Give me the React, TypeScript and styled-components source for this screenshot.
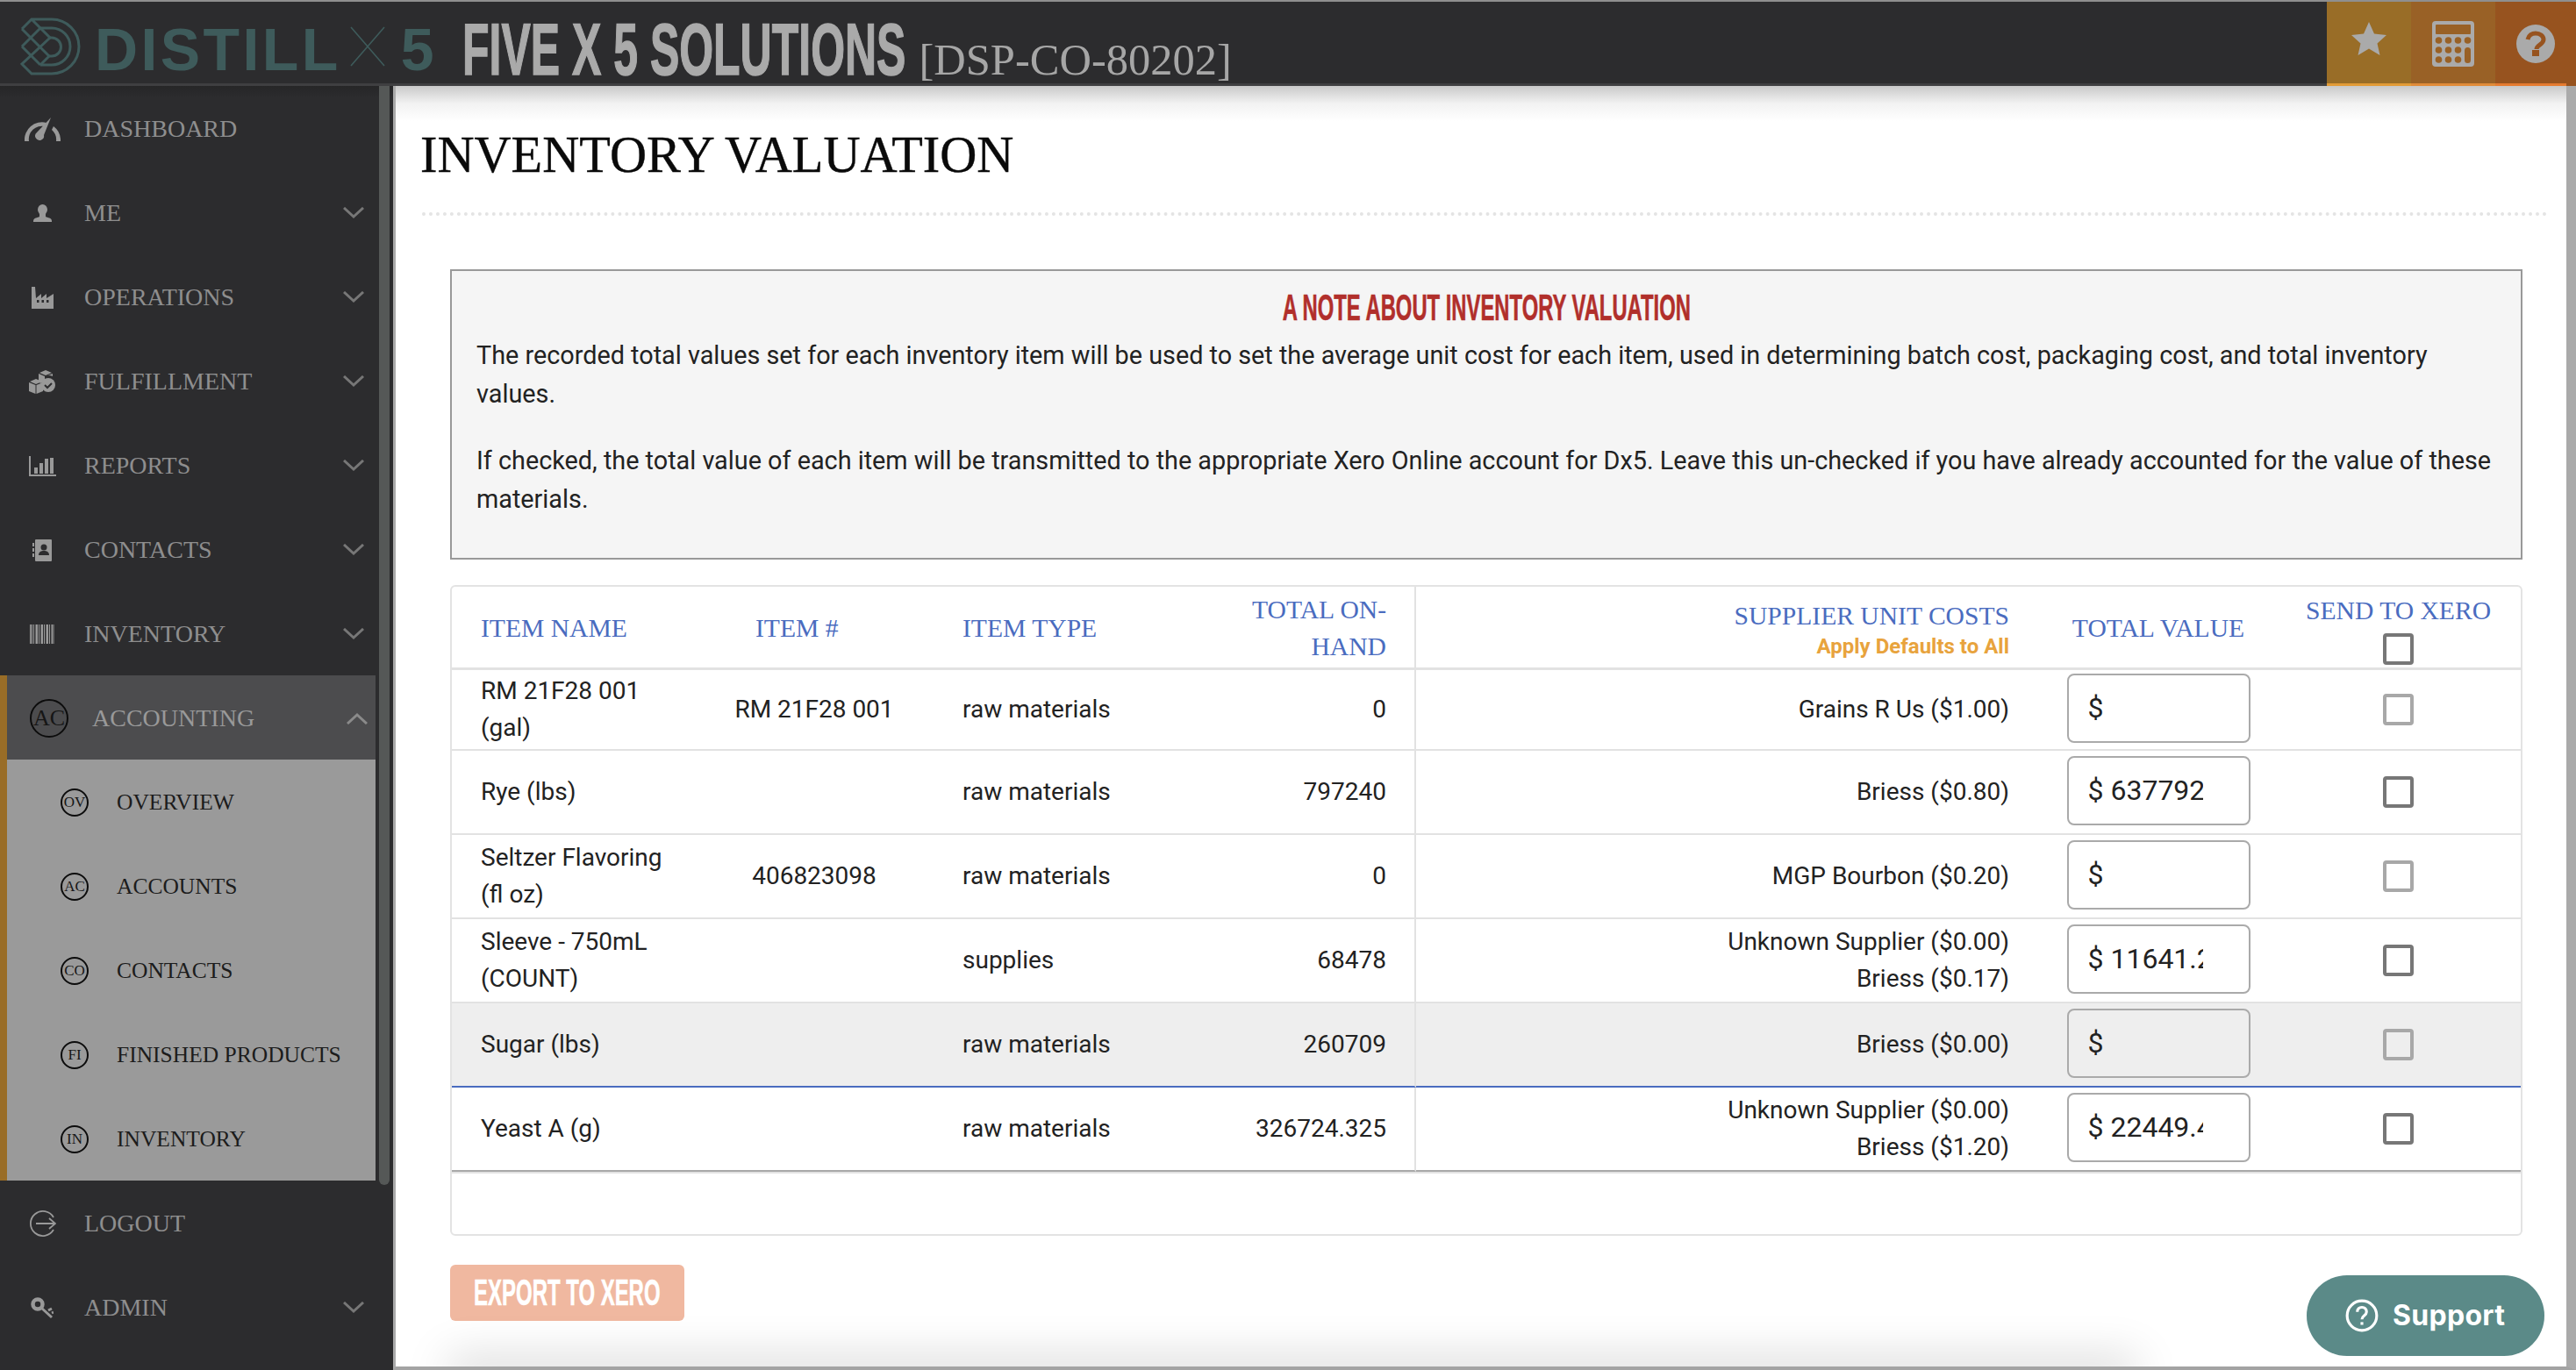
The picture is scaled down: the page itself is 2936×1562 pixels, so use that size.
import React from 'react';
import styled, { createGlobalStyle } from 'styled-components';

const SANS = '"Liberation Sans", Arial, sans-serif';
const SLAB = '"Liberation Serif", "DejaVu Serif", serif';
const BODY = 'Roboto, "Liberation Sans", sans-serif';

const GlobalStyle = createGlobalStyle`
    html, body {
        margin: 0;
        padding: 0;
        height: 100%;
        overflow: hidden;
        background: #2c2c2e;
    }

    * {
        box-sizing: border-box;
    }
`;

const Page = styled.div`
    display: flex;
    flex-direction: column;
    position: relative;
    width: 2936px;
    height: 1562px;
    overflow: hidden;
    font-family: ${BODY};
`;

/* ---------- top bar ---------- */

const TopBar = styled.header`
    display: flex;
    align-items: stretch;
    flex: none;
    height: 98px;
    background: #2c2c2e;
    border-top: 2px solid #8f8f8f;
    box-shadow: inset 0 -3px 0 #3f3f41;
`;

const Brand = styled.div`
    display: flex;
    align-items: flex-start;
    flex: 1;
    padding: 18px 0 0 23px;
`;

const LogoMark = styled.svg`
    flex: none;
    width: 70px;
    height: 66px;
    fill: none;
    stroke: #3e5b5b;
    stroke-width: 3;
`;

const LogoWord = styled.span`
    margin: -3px 0 0 15px;
    font: 700 68px/78px ${SANS};
    letter-spacing: 3.4px;
    color: #3e5b5b;
`;

const LogoTimes = styled.svg`
    flex: none;
    width: 40px;
    height: 46px;
    margin: 10px 18px 0 10px;
    stroke: #3e5b5b;
    stroke-width: 1.6;
`;

const LogoFive = styled.span`
    font: 700 68px/78px ${SANS};
    color: #3e5b5b;
    margin-top: -3px;
`;

const CompanyBox = styled.div`
    flex: none;
    width: 505px;
    margin: -4px 16px 0 32px;
`;

const CompanyName = styled.span`
    display: inline-block;
    font: 700 84px/80px ${SANS};
    white-space: nowrap;
    color: #aaaaaa;
    -webkit-text-stroke: 1.5px #aaaaaa;
    transform: scaleX(0.595);
    transform-origin: left top;
`;

const CompanyCode = styled.span`
    margin-top: 18px;
    font: 400 50.5px/60px ${SLAB};
    color: #a6a6a6;
    white-space: nowrap;
`;

const ActionButton = styled.div<{ $bg: string; $bar: string; $width: number; $barInset?: number }>`
    display: flex;
    align-items: flex-start;
    justify-content: center;
    position: relative;
    flex: none;
    width: ${(p) => p.$width}px;
    padding-top: ${(p) => (p.$barInset ? 26 : 22)}px;
    background: ${(p) => p.$bg};

    &::after {
        content: '';
        position: absolute;
        left: 0;
        right: ${(p) => p.$barInset ?? 0}px;
        bottom: 0;
        height: 3px;
        background: ${(p) => p.$bar};
    }
`;

/* ---------- body ---------- */

const Shell = styled.div`
    display: flex;
    flex: 1;
    min-height: 0;
`;

const Sidebar = styled.aside`
    display: flex;
    flex: none;
    width: 448px;
    background: linear-gradient(#262627, #2c2c2e 14px);
`;

const Nav = styled.nav`
    flex: none;
    width: 432px;
`;

const ScrollThumb = styled.div`
    flex: none;
    width: 12px;
    height: 1253px;
    border-radius: 0 0 6px 6px;
    background: #555857;
`;

const NavRow = styled.div`
    display: flex;
    align-items: center;
    height: 96px;
    padding: 2px 17px 0 24px;
    font: 400 28px/1 ${SLAB};
    color: #8e8e8e;
`;

const NavIcon = styled.span`
    display: flex;
    align-items: center;
    justify-content: center;
    flex: none;
    width: 48px;
    margin-right: 24px;
    color: #999999;
`;

const NavLabel = styled.span<{ $gap?: number }>`
    flex: 1;
    margin-left: ${(p) => p.$gap ?? 0}px;
    white-space: nowrap;
`;

const Group = styled.div`
    width: 428px;
    border-left: 8px solid #996d27;
`;

const ActiveHead = styled(NavRow)`
    padding-left: 26px;
    padding-right: 9px;
    background: #4c4c4e;
    color: #999999;
`;

const Badge = styled.span<{ $size: number; $font: number }>`
    display: flex;
    align-items: center;
    justify-content: center;
    flex: none;
    width: ${(p) => p.$size}px;
    height: ${(p) => p.$size}px;
    border: 2px solid #0c0c0c;
    border-radius: 50%;
    font: 400 ${(p) => p.$font}px/1 ${SLAB};
    color: #161616;
`;

const SubList = styled.div`
    background: #9a9a9a;
`;

const SubRow = styled.div`
    display: flex;
    align-items: center;
    height: 96px;
    padding: 1px 0 0 61px;
    font: 400 25.5px/1 ${SLAB};
    color: #1c1c1c;
    white-space: nowrap;
`;

const SubLabel = styled.span`
    margin-left: 32px;
`;

const Main = styled.main`
    flex: 1;
    position: relative;
    min-width: 0;
    overflow: hidden;
    padding: 0 20px 0 30px;
    border-left: 3px solid #aaaaaa;
    border-right: 11px solid #aaaaaa;
    border-bottom: 4px solid #a3a3a3;
    background: linear-gradient(#c9c9c9, #f2f2f2 20px, #fff 40px);

    &::after {
        content: '';
        position: absolute;
        left: 70px;
        right: 500px;
        bottom: -12px;
        height: 12px;
        box-shadow: 0 0 50px 10px rgba(0, 0, 0, 0.17);
    }
`;

const Title = styled.h1`
    margin: 0;
    padding: 49px 0 35px;
    border-bottom: 4px dotted #e4e4e4;
    text-indent: -2px;
    font: 400 58.3px/60px ${SLAB};
    color: #0a0a0a;
    -webkit-text-stroke: 0.4px #0a0a0a;
`;

const Content = styled.div`
    padding: 61px 30px 0 32px;
`;

const Note = styled.section`
    height: 331px;
    padding: 20px 28px 0;
    margin-bottom: 29px;
    border: 2px solid #999999;
    background: #f5f5f5;
    font-size: 28.8px;
    line-height: 44px;
    color: #222222;
`;

const NoteTitle = styled.h4`
    margin: 0 0 6px;
    text-align: center;
    line-height: 44px;
`;

const Squeezed = styled.span<{ $scale: number }>`
    display: inline-block;
    white-space: nowrap;
    font-family: ${SANS};
    font-weight: 700;
    transform: scaleX(${(p) => p.$scale});
`;

const NoteHeading = styled(Squeezed)`
    font-size: 42px;
    color: #b12f2b;
    -webkit-text-stroke: 0.6px #b12f2b;
`;

const NoteText = styled.p`
    margin: 0 0 32px;
`;

const Card = styled.div`
    height: 742px;
    margin-bottom: 33px;
    border: 2px solid #e3e3e3;
    border-radius: 6px;
`;

const Table = styled.table`
    width: 100%;
    table-layout: fixed;
    border-collapse: separate;
    border-spacing: 0;
    border-bottom: 2px solid #e3e3e3;
`;

const HeadCell = styled.th<{ $align?: string; $pl?: number; $pr?: number; $divider?: boolean }>`
    height: 95px;
    padding: 2px ${(p) => p.$pr ?? 12}px 0 ${(p) => p.$pl ?? 33}px;
    border-bottom: 3px solid #e2e2e2;
    border-right: ${(p) => (p.$divider ? '2px solid #e2e2e2' : 'none')};
    text-align: ${(p) => p.$align ?? 'left'};
    vertical-align: middle;
    font: 400 29.6px/42px ${SLAB};
    color: #4a6cbf;
`;

const ApplyLink = styled.div`
    margin-top: -1px;
    font: 700 24px/30px ${BODY};
    color: #e8a33d;
`;

const Row = styled.tr<{ $muted?: boolean }>`
    background: ${(p) => (p.$muted ? '#eeeeee' : '#ffffff')};
`;

const Cell = styled.td<{
    $align?: string;
    $pl?: number;
    $pr?: number;
    $divider?: boolean;
    $line: string;
    $height: number;
}>`
    height: ${(p) => p.$height}px;
    padding: 0 ${(p) => p.$pr ?? 12}px 0 ${(p) => p.$pl ?? 33}px;
    border-bottom: 2px solid ${(p) => p.$line};
    border-right: ${(p) => (p.$divider ? '2px solid #e2e2e2' : 'none')};
    text-align: ${(p) => p.$align ?? 'left'};
    vertical-align: middle;
    font-size: 28px;
    line-height: 42px;
    color: #222222;
`;

const ValueInput = styled.input`
    display: block;
    width: 209px;
    height: 79px;
    margin: -2px auto 2px;
    padding: 0 52px 0 22px;
    border: 2px solid #aaaaaa;
    border-radius: 8px;
    outline: none;
    background: transparent;
    font: 400 32px ${BODY};
    color: #222222;
`;

const Check = styled.span<{ $dim?: boolean; $small?: boolean }>`
    display: block;
    width: 35px;
    height: 36px;
    margin: ${(p) => (p.$small ? '5px' : '0')} auto 0;
    border: 4px solid ${(p) => (p.$dim ? '#a8a8a8' : '#777777')};
    border-radius: 4px;
`;

const ExportButton = styled.div`
    display: flex;
    align-items: center;
    justify-content: center;
    width: 267px;
    height: 64px;
    overflow: hidden;
    border-radius: 6px;
    background: #f0b8a0;
`;

const ExportLabel = styled(Squeezed)`
    font-size: 42px;
    color: #ffffff;
    -webkit-text-stroke: 0.6px #ffffff;
`;

const Support = styled.div`
    display: flex;
    align-items: center;
    position: absolute;
    right: 36px;
    bottom: 16px;
    width: 271px;
    height: 92px;
    padding-left: 43px;
    border-radius: 46px;
    background: #5b8a88;
    font: 700 32px/1 Inter, ${SANS};
    letter-spacing: 0.3px;
    color: #ffffff;
`;

const SupportIcon = styled.svg`
    width: 40px;
    height: 40px;
    margin-right: 15px;
    fill: none;
    stroke: #ffffff;
    stroke-width: 3;
`;

const Chevron: React.FC<{ up?: boolean }> = ({ up }) => (
    <svg width="24" height="14" viewBox="0 0 24 14" fill="none" stroke={up ? '#8a8a8a' : '#777777'} strokeWidth="3">
        <path d={up ? 'M1 13 12 3 23 13' : 'M1 1 12 11 23 1'} />
    </svg>
);

const Gauge = () => (
    <svg width="41" height="27" viewBox="0 0 41 27" fill="currentColor">
        <path d="M30 0 22 20a5 5 0 1 1-8-3z" />
        <path d="M0 27a20 20 0 0 1 25-21l-2 4A15 15 0 0 0 5 27z" />
        <path d="M33 10a20 20 0 0 1 8 17h-5a15 15 0 0 0-5-13z" />
    </svg>
);

const Person = () => (
    <svg width="21" height="20" viewBox="0 0 21 20" fill="currentColor">
        <ellipse cx="10.5" cy="6" rx="5.5" ry="6" />
        <path d="M7 10v4c-2 1.500-7 1-7 5v1h21v-1c0-4-5-3.500-7-5v-4z" />
    </svg>
);

const Factory = () => (
    <svg width="25" height="25" viewBox="0 0 25 25" fill="currentColor">
        <path d="M0 25V0h4l1 13 6-5v5l6-5v5l8-5v17z" />
        <g fill="#2c2c2e">
            <rect x="6" y="15" width="2.500" height="3" />
            <rect x="11.500" y="15" width="2.500" height="3" />
            <rect x="17" y="15" width="2.500" height="3" />
        </g>
    </svg>
);

const Boxes = () => (
    <svg width="30" height="27" viewBox="0 0 30 27" fill="currentColor">
        <path d="M1 13 8 10l7 3-7 3zM0 14l7.500 3v10L0 24zM16 14l-7.500 3v10l7.500-3z" />
        <path d="M12 3l7-3 7 3-7 3zM11 4l7 3v5a9 9 0 0 0-4 3l-3-1zM27 4v3a9 9 0 0 0-8 0z" />
        <circle cx="22" cy="17" r="8" />
        <path d="M18 17l3 3 5-5" fill="none" stroke="#2c2c2e" strokeWidth="2" />
    </svg>
);

const Bars = () => (
    <svg width="31" height="23" viewBox="0 0 31 23" fill="currentColor">
        <path d="M0 0h2v21h29v2H0z" />
        <rect x="6" y="13" width="4" height="7" />
        <rect x="12" y="8" width="4" height="12" />
        <rect x="18" y="3" width="4" height="17" />
        <rect x="24" y="2" width="4" height="18" />
    </svg>
);

const ContactBook = () => (
    <svg width="22" height="25" viewBox="0 0 22 25" fill="currentColor">
        <rect x="3" width="19" height="25" rx="1" />
        <g>
            <rect y="4" width="2" height="4" />
            <rect y="10" width="2" height="4" />
            <rect y="16" width="2" height="4" />
        </g>
        <g fill="#2c2c2e">
            <circle cx="13" cy="9" r="3.500" />
            <path d="M7 18c0-4 3-5 6-5s6 1 6 5z" />
        </g>
    </svg>
);

const Barcode = () => (
    <svg width="28" height="22" viewBox="0 0 28 22" fill="currentColor">
        {[0, 2, 4, 6.500, 8, 10, 12.500, 14, 16, 18.500, 20, 22, 24.500, 26.500].map((x, i) => (
            <rect key={x} x={x} width={i % 3 === 0 ? 1.500 : 1} height="22" />
        ))}
    </svg>
);

const Logout = () => (
    <svg width="31" height="30" viewBox="0 0 31 30" fill="none" stroke="currentColor" strokeWidth="1.800">
        <path d="M28 8A14 14 0 1 0 28 22" />
        <path d="M8 15h22M23 9l7 6-7 6" />
    </svg>
);

const KeyIcon = () => (
    <svg width="26" height="25" viewBox="0 0 26 25" fill="none" stroke="currentColor">
        <circle cx="8" cy="8" r="5.500" strokeWidth="4.500" />
        <path d="M12 12 24 23M20 15l4-2M24 18l2-1" strokeWidth="3" />
    </svg>
);

const StarIcon = () => (
    <svg width="40" height="40" viewBox="0 0 40 38" fill="#aaaaaa">
        <path d="M20 0l6 13.500 14 1.500-10.500 9.500L32.500 38 20 30.500 7.500 38l3-13.500L0 15l14-1.500z" />
    </svg>
);

const CalcIcon: React.FC<{ hole: string }> = ({ hole }) => (
    <svg width="48" height="52" viewBox="0 0 48 52">
        <rect width="48" height="52" rx="4" fill="#aaaaaa" />
        <rect x="4" y="4" width="40" height="11" rx="1" fill={hole} />
        {[0, 1, 2].map((r) =>
            [0, 1, 2, 3].map((c) =>
                r > 0 && c === 3 ? null : (
                    <circle key={`${r}${c}`} cx={7.500 + c * 11} cy={22 + r * 11} r="3.800" fill={hole} />
                )
            )
        )}
        <rect x="37" y="30" width="7" height="18" rx="3.500" fill={hole} />
    </svg>
);

const HelpIcon: React.FC<{ hole: string }> = ({ hole }) => (
    <svg width="44" height="44" viewBox="0 0 44 44">
        <circle cx="22" cy="22" r="22" fill="#aaaaaa" />
        <path d="M13 17c1-5 5-7 9-7 5 0 9 3 9 7 0 6-8 6-8 11" fill="none" stroke={hole} strokeWidth="5" />
        <rect x="18" y="29" width="8" height="7" fill={hole} />
    </svg>
);

type Item = {
    name: string;
    number?: string;
    type: string;
    onHand: string;
    suppliers: string[];
    value: string;
    dim?: boolean;
    muted?: boolean;
    line?: string;
    height?: number;
};

const items: Item[] = [
    { name: 'RM 21F28 001 (gal)', number: 'RM 21F28 001', type: 'raw materials', onHand: '0', suppliers: ['Grains R Us ($1.00)'], value: '$', dim: true, height: 92 },
    { name: 'Rye (lbs)', type: 'raw materials', onHand: '797240', suppliers: ['Briess ($0.80)'], value: '$ 637792' },
    { name: 'Seltzer Flavoring (fl oz)', number: '406823098', type: 'raw materials', onHand: '0', suppliers: ['MGP Bourbon ($0.20)'], value: '$', dim: true },
    { name: 'Sleeve - 750mL (COUNT)', type: 'supplies', onHand: '68478', suppliers: ['Unknown Supplier ($0.00)', 'Briess ($0.17)'], value: '$ 11641.26' },
    { name: 'Sugar (lbs)', type: 'raw materials', onHand: '260709', suppliers: ['Briess ($0.00)'], value: '$', dim: true, muted: true, line: '#4a6cbf' },
    { name: 'Yeast A (g)', type: 'raw materials', onHand: '326724.325', suppliers: ['Unknown Supplier ($0.00)', 'Briess ($1.20)'], value: '$ 22449.40', line: '#a8a8a8' },
];

const navTop = [
    { label: 'DASHBOARD', icon: <Gauge /> },
    { label: 'ME', icon: <Person />, more: true },
    { label: 'OPERATIONS', icon: <Factory />, more: true },
    { label: 'FULFILLMENT', icon: <Boxes />, more: true },
    { label: 'REPORTS', icon: <Bars />, more: true },
    { label: 'CONTACTS', icon: <ContactBook />, more: true },
    { label: 'INVENTORY', icon: <Barcode />, more: true },
];

const subItems = [
    ['OV', 'OVERVIEW'],
    ['AC', 'ACCOUNTS'],
    ['CO', 'CONTACTS'],
    ['FI', 'FINISHED PRODUCTS'],
    ['IN', 'INVENTORY'],
];

export default function App() {
    return (
        <Page>
            <GlobalStyle />

            <TopBar>
                <Brand>
                    <LogoMark viewBox="13 10 70 66">
                        <path d="M15 23 26 12h23a31 31 0 0 1 0 62H26L15 63l32-30L26 12M15 23l32 32M15 43l21-21M15 43l21 21M15 63l11 11M36 64l11-11" />
                        <path d="M36 22h13a21 21 0 0 1 0 42H36" />
                        <path d="M46 33h3a10.500 10.500 0 0 1 0 21h-3" />
                    </LogoMark>
                    <LogoWord>DISTILL</LogoWord>
                    <LogoTimes viewBox="0 0 40 46">
                        <path d="M1 1 39 45M39 1 1 45" />
                    </LogoTimes>
                    <LogoFive>5</LogoFive>
                    <CompanyBox>
                        <CompanyName>FIVE X 5 SOLUTIONS</CompanyName>
                    </CompanyBox>
                    <CompanyCode>[DSP-CO-80202]</CompanyCode>
                </Brand>
                <ActionButton $bg="#996d27" $bar="#e29b36" $width={96}>
                    <StarIcon />
                </ActionButton>
                <ActionButton $bg="#996126" $bar="#e08b38" $width={96}>
                    <CalcIcon hole="#996126" />
                </ActionButton>
                <ActionButton $bg="#97531f" $bar="#e57b30" $width={92} $barInset={11}>
                    <HelpIcon hole="#97531f" />
                </ActionButton>
            </TopBar>

            <Shell>
                <Sidebar>
                    <Nav>
                        {navTop.map((n) => (
                            <NavRow key={n.label}>
                                <NavIcon>{n.icon}</NavIcon>
                                <NavLabel>{n.label}</NavLabel>
                                {n.more && <Chevron />}
                            </NavRow>
                        ))}

                        <Group>
                            <ActiveHead>
                                <Badge $size={44} $font={26}>AC</Badge>
                                <NavLabel $gap={27}>ACCOUNTING</NavLabel>
                                <Chevron up />
                            </ActiveHead>
                            <SubList>
                                {subItems.map(([badge, label]) => (
                                    <SubRow key={label}>
                                        <Badge $size={32} $font={17}>{badge}</Badge>
                                        <SubLabel>{label}</SubLabel>
                                    </SubRow>
                                ))}
                            </SubList>
                        </Group>

                        <NavRow>
                            <NavIcon><Logout /></NavIcon>
                            <NavLabel>LOGOUT</NavLabel>
                        </NavRow>
                        <NavRow>
                            <NavIcon><KeyIcon /></NavIcon>
                            <NavLabel>ADMIN</NavLabel>
                            <Chevron />
                        </NavRow>
                    </Nav>
                    <ScrollThumb />
                </Sidebar>

                <Main>
                    <Title>INVENTORY VALUATION</Title>

                    <Content>
                        <Note>
                            <NoteTitle>
                                <NoteHeading $scale={0.567}>A NOTE ABOUT INVENTORY VALUATION</NoteHeading>
                            </NoteTitle>
                            <NoteText>
                                The recorded total values set for each inventory item will be used to set the average unit cost for each item, used in determining batch cost, packaging cost, and total inventory values.
                            </NoteText>
                            <NoteText>
                                If checked, the total value of each item will be transmitted to the appropriate Xero Online account for Dx5. Leave this un-checked if you have already accounted for the value of these materials.
                            </NoteText>
                        </Note>

                        <Card>
                            <Table>
                                <colgroup>
                                    <col style={{ width: 277 }} />
                                    <col style={{ width: 272 }} />
                                    <col style={{ width: 326 }} />
                                    <col style={{ width: 224 }} />
                                    <col style={{ width: 712 }} />
                                    <col style={{ width: 268 }} />
                                    <col />
                                </colgroup>
                                <thead>
                                    <tr>
                                        <HeadCell>ITEM NAME</HeadCell>
                                        <HeadCell $pl={69}>ITEM #</HeadCell>
                                        <HeadCell>ITEM TYPE</HeadCell>
                                        <HeadCell $align="right" $pr={32} $divider>TOTAL ON-HAND</HeadCell>
                                        <HeadCell $align="right" $pr={36}>
                                            SUPPLIER UNIT COSTS
                                            <ApplyLink>Apply Defaults to All</ApplyLink>
                                        </HeadCell>
                                        <HeadCell $align="center" $pl={0} $pr={0}>TOTAL VALUE</HeadCell>
                                        <HeadCell $align="center" $pl={0} $pr={0}>
                                            SEND TO XERO
                                            <Check $small />
                                        </HeadCell>
                                    </tr>
                                </thead>
                                <tbody>
                                    {items.map((item) => {
                                        const line = item.line ?? '#e2e2e2';
                                        const height = item.height ?? 96;
                                        return (
                                            <Row key={item.name} $muted={item.muted}>
                                                <Cell $line={line} $height={height}>{item.name}</Cell>
                                                <Cell $line={line} $height={height} $align="center" $pl={12}>{item.number}</Cell>
                                                <Cell $line={line} $height={height}>{item.type}</Cell>
                                                <Cell $line={line} $height={height} $align="right" $pr={32} $divider>{item.onHand}</Cell>
                                                <Cell $line={line} $height={height} $align="right" $pr={36}>
                                                    {item.suppliers.map((s) => <div key={s}>{s}</div>)}
                                                </Cell>
                                                <Cell $line={line} $height={height} $pl={0} $pr={0}>
                                                    <ValueInput readOnly value={item.value} />
                                                </Cell>
                                                <Cell $line={line} $height={height} $pl={0} $pr={0}>
                                                    <Check $dim={item.dim} />
                                                </Cell>
                                            </Row>
                                        );
                                    })}
                                </tbody>
                            </Table>
                        </Card>

                        <ExportButton>
                            <ExportLabel $scale={0.57}>EXPORT TO XERO</ExportLabel>
                        </ExportButton>
                    </Content>
                </Main>
            </Shell>

            <Support>
                <SupportIcon viewBox="0 0 38 38">
                    <circle cx="19" cy="19" r="16" />
                    <path d="M14 15c0-3 2-5 5-5s5 2 5 5c0 4-5 4-5 8" />
                    <path d="M19 26v3" />
                </SupportIcon>
                Support
            </Support>
        </Page>
    );
}
